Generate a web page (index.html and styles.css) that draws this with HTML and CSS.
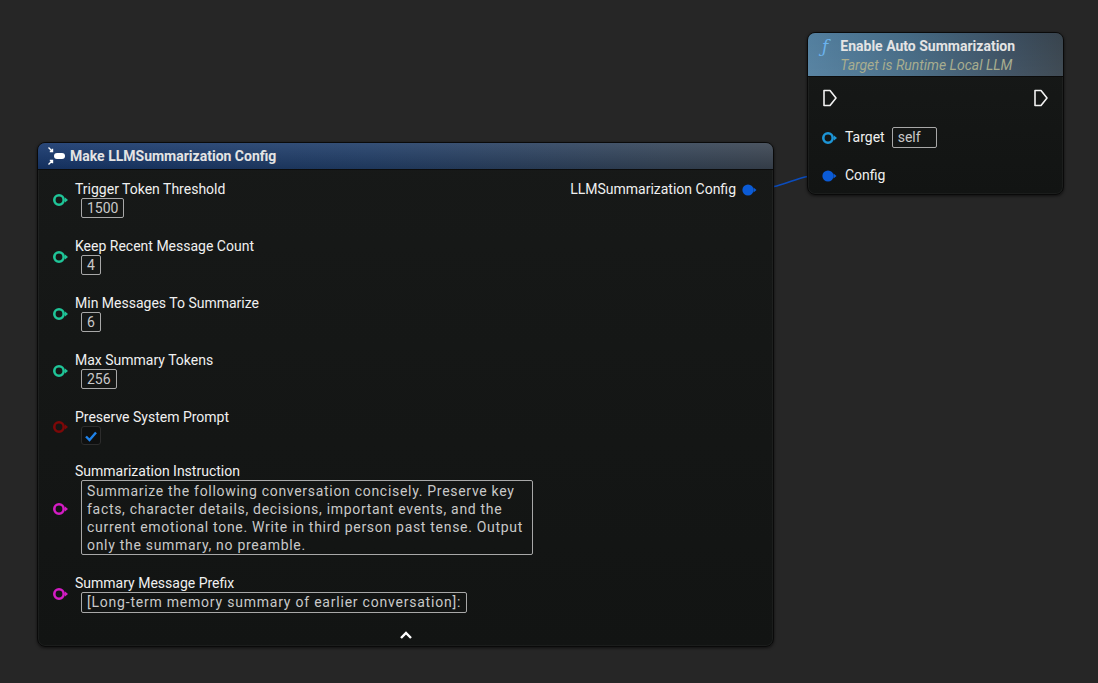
FILE: index.html
```html
<!DOCTYPE html>
<html lang="en">
<head>
  <meta charset="UTF-8" />
  <title>Blueprint - Summarization</title>
  <link rel="stylesheet" href="styles.css">
</head>
<body>
  <div id="graph">

    <svg class="wires" width="1098" height="683">
      <path d="M756 188 C 790 188, 792 175, 824 175" />
    </svg>

    <!-- make struct node -->
    <div class="node make-node">
      <div class="node-header make-header">
        <svg class="make-icon" width="20" height="20" viewBox="0 0 20 20">
          <rect x="7" y="7" width="11" height="6" rx="3" fill="#fff" />
          <path d="M1.5 1.5 L5.5 5.5 M5.5 2.8 V5.5 H2.8" stroke="#fff" stroke-width="1.4" fill="none" />
          <path d="M1.5 18.5 L5.5 14.5 M5.5 17.2 V14.5 H2.8" stroke="#fff" stroke-width="1.4" fill="none" />
        </svg>
        <span class="title">Make LLMSummarization Config</span>
      </div>

      <div class="node-body">
        <div class="inputs">
          <div class="pin-row">
            <svg class="pin" width="17" height="14" viewBox="0 0 17 14"><circle cx="7" cy="7" r="4.7" class="ring int" /><polygon points="13,4.6 16,7 13,9.4" class="tip int" /></svg>
            <div class="pin-field">
              <div class="label">Trigger Token Threshold</div>
              <div class="value">1500</div>
            </div>
          </div>
          <div class="pin-row">
            <svg class="pin" width="17" height="14" viewBox="0 0 17 14"><circle cx="7" cy="7" r="4.7" class="ring int" /><polygon points="13,4.6 16,7 13,9.4" class="tip int" /></svg>
            <div class="pin-field">
              <div class="label">Keep Recent Message Count</div>
              <div class="value">4</div>
            </div>
          </div>
          <div class="pin-row">
            <svg class="pin" width="17" height="14" viewBox="0 0 17 14"><circle cx="7" cy="7" r="4.7" class="ring int" /><polygon points="13,4.6 16,7 13,9.4" class="tip int" /></svg>
            <div class="pin-field">
              <div class="label">Min Messages To Summarize</div>
              <div class="value">6</div>
            </div>
          </div>
          <div class="pin-row">
            <svg class="pin" width="17" height="14" viewBox="0 0 17 14"><circle cx="7" cy="7" r="4.7" class="ring int" /><polygon points="13,4.6 16,7 13,9.4" class="tip int" /></svg>
            <div class="pin-field">
              <div class="label">Max Summary Tokens</div>
              <div class="value">256</div>
            </div>
          </div>
          <div class="pin-row check-row">
            <svg class="pin" width="17" height="14" viewBox="0 0 17 14"><circle cx="7" cy="7" r="4.7" class="ring bool" /><polygon points="13,4.6 16,7 13,9.4" class="tip bool" /></svg>
            <div class="pin-field">
              <div class="label">Preserve System Prompt</div>
              <div class="checkbox">
                <svg width="14" height="14" viewBox="0 0 14 14"><path d="M2 7.5 L5.5 11 L12 3.5" /></svg>
              </div>
            </div>
          </div>
          <div class="pin-row">
            <svg class="pin" width="17" height="14" viewBox="0 0 17 14"><circle cx="7" cy="7" r="4.7" class="ring str" /><polygon points="13,4.6 16,7 13,9.4" class="tip str" /></svg>
            <div class="pin-field">
              <div class="label">Summarization Instruction</div>
              <div class="value textarea">Summarize the following conversation concisely. Preserve key<br>facts, character details, decisions, important events, and the<br>current emotional tone. Write in third person past tense. Output<br>only the summary, no preamble.</div>
            </div>
          </div>
          <div class="pin-row">
            <svg class="pin" width="17" height="14" viewBox="0 0 17 14"><circle cx="7" cy="7" r="4.7" class="ring str" /><polygon points="13,4.6 16,7 13,9.4" class="tip str" /></svg>
            <div class="pin-field">
              <div class="label">Summary Message Prefix</div>
              <div class="value wide">[Long-term memory summary of earlier conversation]:</div>
            </div>
          </div>
        </div>

        <div class="outputs">
          <div class="out-row">
            <span class="label">LLMSummarization Config</span>
            <svg class="pin" width="17" height="14" viewBox="0 0 17 14"><circle cx="7" cy="7" r="5.6" class="filled struct" /><polygon points="12.5,4.6 15.5,7 12.5,9.4" class="tip struct" /></svg>
          </div>
        </div>
      </div>

      <div class="node-footer">
        <svg width="14" height="9" viewBox="0 0 14 9"><path d="M2 7 L7 2 L12 7" /></svg>
      </div>
    </div>

    <!-- function call node -->
    <div class="node fn-node">
      <div class="node-header fn-header">
        <span class="fn-icon">ƒ</span>
        <div class="fn-titles">
          <div class="title">Enable Auto Summarization</div>
          <div class="subtitle">Target is Runtime Local LLM</div>
        </div>
      </div>
      <div class="fn-body">
        <div class="exec-row">
          <svg width="16" height="18" viewBox="0 0 16 18"><path d="M2 1.5 H8 L14 9 L8 16.5 H2 Z" class="exec" /></svg>
          <svg width="16" height="18" viewBox="0 0 16 18"><path d="M2 1.5 H8 L14 9 L8 16.5 H2 Z" class="exec" /></svg>
        </div>
        <div class="fn-row">
          <svg class="pin" width="17" height="14" viewBox="0 0 17 14"><circle cx="7" cy="7" r="4.7" class="ring obj" /><polygon points="13,4.6 16,7 13,9.4" class="tip obj" /></svg>
          <span class="label">Target</span>
          <span class="value self">self</span>
        </div>
        <div class="fn-row">
          <svg class="pin" width="17" height="14" viewBox="0 0 17 14"><circle cx="7" cy="7" r="5.6" class="filled struct" /><polygon points="12.5,4.6 15.5,7 12.5,9.4" class="tip struct" /></svg>
          <span class="label">Config</span>
        </div>
      </div>
    </div>

  </div>
</body>
</html>
```

FILE: styles.css
```css
html, body {
  margin: 0;
  padding: 0;
  height: 100%;
  background: #262626;
  font-family: Roboto, 'Liberation Sans', sans-serif;
  color: #eee;
  overflow: hidden;
}

#graph {
  position: relative;
  width: 1098px;
  height: 683px;
}

.wires {
  position: absolute;
  left: 0;
  top: 0;
  pointer-events: none;
}

.wires path {
  fill: none;
  stroke: #0b4cbc;
  stroke-width: 1.6;
}

.node {
  position: absolute;
  box-sizing: border-box;
  border: 1px solid #0a0a0a;
  border-radius: 8px;
  background: linear-gradient(#171918, #121413);
  box-shadow: 0 1px 3px rgba(0,0,0,0.6), inset 0 0 0 1px rgba(255,255,255,0.04);
  display: flex;
  flex-direction: column;
}

.node-header {
  border-radius: 7px 7px 0 0;
  display: flex;
  align-items: center;
  font-weight: bold;
  font-size: 14px;
  color: #e4e4e4;
}

.label {
  font-size: 14px;
  line-height: 17px;
  color: #f0f0f0;
  white-space: nowrap;
}

.value {
  box-sizing: border-box;
  display: inline-block;
  border: 1px solid #a8a8a8;
  border-radius: 2px;
  padding: 0 5px;
  height: 20px;
  line-height: 18px;
  font-size: 14px;
  color: #c9c9c9;
  white-space: nowrap;
}

/* pins */
.ring { fill: none; stroke-width: 2.6; }
.ring.int { stroke: #1fc598; }
.tip.int { fill: #1fc598; }
.ring.bool { stroke: #7c0808; }
.tip.bool { fill: #7c0808; }
.ring.str { stroke: #d41cc4; }
.tip.str { fill: #d41cc4; }
.ring.obj { stroke: #1d95d6; }
.tip.obj { fill: #1d95d6; }
.filled.struct, .tip.struct { fill: #0b5bd6; }

/* make node */
.make-node {
  left: 37px;
  top: 142px;
  width: 737px;
  height: 505px;
}

.make-header {
  height: 26px;
  padding-left: 9px;
  gap: 3px;
  background: linear-gradient(to bottom, rgba(255,255,255,0.08), rgba(0,0,0,0.15)),
              linear-gradient(to right, #17386e, #23406a 45%, #36465a 85%, #3c4653);
  border-bottom: 1px solid #0c0c0c;
}

.node-body {
  display: flex;
  justify-content: space-between;
  padding: 11px 15px 0 14px;
}

.inputs {
  display: flex;
  flex-direction: column;
  gap: 20px;
}

.pin-row {
  display: flex;
  align-items: center;
  gap: 6px;
}

.pin-field {
  display: flex;
  flex-direction: column;
  align-items: flex-start;
}

.pin-field .value,
.pin-field .checkbox {
  margin-left: 6px;
}

.checkbox {
  box-sizing: border-box;
  width: 20px;
  height: 19px;
  margin-bottom: -1px;
  background: #0f1010;
  border: 1px solid #2c2c2c;
  border-radius: 3px;
  display: flex;
  align-items: center;
  justify-content: center;
}

.check-row {
  margin-bottom: -1px;
}

.checkbox path {
  fill: none;
  stroke: #1f82ea;
  stroke-width: 2.4;
}

.textarea {
  width: 452px;
  height: 75px;
  padding: 1px 5px;
  letter-spacing: 0.7px;
  line-height: 18px;
}

.wide {
  letter-spacing: 0.78px;
  height: 21px;
}

.outputs .out-row {
  display: flex;
  align-items: center;
  gap: 5px;
}

.node-footer {
  margin-top: auto;
  padding-bottom: 2px;
  text-align: center;
}

.node-footer path {
  fill: none;
  stroke: #fff;
  stroke-width: 2.4;
}

/* function node */
.fn-node {
  left: 807px;
  top: 32px;
  width: 257px;
  height: 163px;
}

.fn-header {
  height: 43px;
  padding-left: 14px;
  gap: 12px;
  align-items: flex-start;
  background: linear-gradient(to bottom, rgba(255,255,255,0.03), rgba(255,255,255,0.07)),
              linear-gradient(to right, #4d7b9c, #3f6580 40%, #35485a 80%, #323e48);
  border-bottom: 1px solid #0c0c0c;
}

.fn-icon {
  font-family: 'DejaVu Serif', serif;
  font-style: italic;
  font-weight: normal;
  font-size: 17px;
  color: #6bb3ee;
  margin-top: 3px;
}

.fn-titles {
  padding-top: 4px;
}

.fn-titles .title {
  line-height: 18px;
}

.subtitle {
  font-weight: normal;
  font-style: italic;
  color: #a8ad8f;
  line-height: 20px;
}

.fn-body {
  padding: 12px 14px 0 14px;
  display: flex;
  flex-direction: column;
}

.exec-row {
  display: flex;
  justify-content: space-between;
  height: 18px;
}

.exec {
  fill: none;
  stroke: #f2f2f2;
  stroke-width: 1.6;
  stroke-linejoin: round;
}

.fn-row {
  display: flex;
  align-items: center;
  gap: 7px;
  margin-left: -1px;
  height: 21px;
}

.exec-row + .fn-row {
  margin-top: 20px;
}

.fn-row + .fn-row {
  margin-top: 17px;
}

.self {
  margin-left: 0;
  width: 45px;
  height: 21px;
}
```
